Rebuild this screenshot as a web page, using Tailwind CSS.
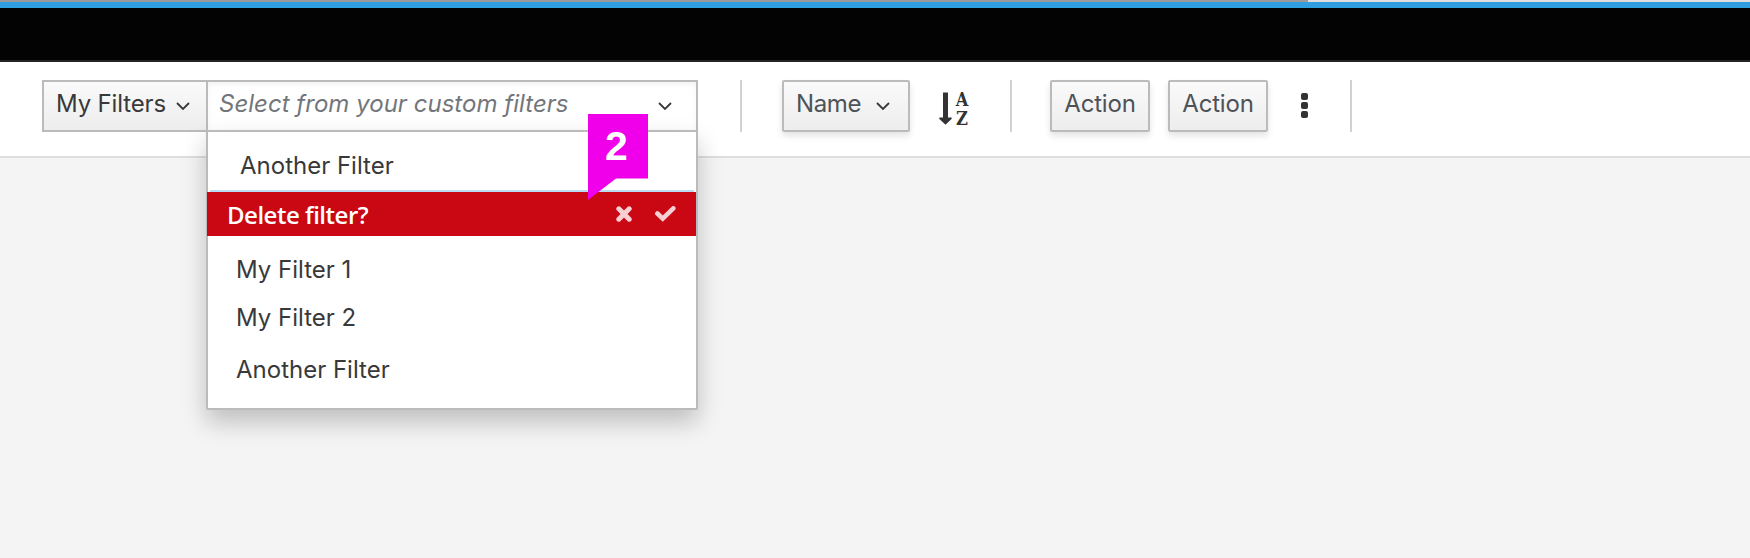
<!DOCTYPE html>
<html lang="en">
<head>
<meta charset="utf-8">
<title>Filters</title>
<script src="https://cdn.jsdelivr.net/npm/@tailwindcss/browser@4"></script>
</head>
<body class="w-[1750px] h-[558px] overflow-hidden bg-[#f4f4f4] font-['Inter',sans-serif] text-[24px] leading-[28px] text-[#393939]">
  <div class="flex h-[2px] bg-[#dfdfe0]"><div class="w-[1308px] bg-[#9b9b9b]"></div></div>
  <header class="h-[60px] border-t-[6px] border-t-[#2f9fe0] border-b-2 border-b-[#252525] bg-[#030303]"></header>
  <main class="flex h-[96px] items-start border-b-2 border-[#dedede] bg-white pl-[42px] pt-[18px] whitespace-nowrap">
    <button class="flex h-[52px] w-[164px] border-2 border-r-0 border-[#bbbbbb] bg-linear-to-b from-[#fafafa] to-[#ededed] pl-[12px] pt-[8px]">
      <span class="w-[120px] text-left tracking-[-0.15px]">My Filters</span>
      <svg class="mt-[11px] h-[10px] w-[14px]" viewBox="0 0 14 10" fill="none" stroke="#393939" stroke-width="1.8"><path d="M1 2 7 8 13 2"/></svg>
    </button>
    <div class="relative w-[492px]">
      <div class="flex h-[52px] border-2 border-[#bbbbbb] bg-white pl-[11px] pt-[8px] shadow-[inset_0_3px_5px_#0000000d]">
        <span class="w-[439px] italic tracking-[0.02px] text-[#72767b]">Select from your custom filters</span>
        <svg class="mt-[11px] h-[10px] w-[14px]" viewBox="0 0 14 10" fill="none" stroke="#393939" stroke-width="1.8"><path d="M1 2 7 8 13 2"/></svg>
      </div>
      <div class="absolute left-0 top-[50px] h-[280px] w-[492px] rounded-b-[2px] border-2 border-[#bbbbbb] bg-white shadow-[0_12px_24px_#00000038]">
        <div class="mx-[2px] h-[60px] border-b-2 border-[#b9dcf2] pl-[30px] pt-[20px]">Another Filter</div>
        <div class="-ml-px flex h-[44px] items-center bg-[#c90813] pl-[20px]">
          <span class="w-[389px] pt-px font-['Open_Sans',sans-serif] text-[24px] font-semibold tracking-[-0.5px] text-white">Delete filter?</span>
          <svg class="h-[16px] w-[16px]" viewBox="0 0 16 16" stroke="#f8d0d4" stroke-width="5" stroke-linecap="round"><path d="M2.800 2.800 13.200 13.200M13.200 2.800 2.800 13.200"/></svg>
          <svg class="ml-[23px] h-[16px] w-[21px]" viewBox="0 0 21 16" fill="none" stroke="#f8d0d4" stroke-width="4.6" stroke-linecap="round"><path d="M2.400 7.500 7.800 12.600 18.300 2.400"/></svg>
        </div>
        <div class="mt-[20px] h-[48px] pl-[28px]">My Filter 1</div>
        <div class="h-[52px] pl-[28px]">My Filter 2</div>
        <div class="pl-[28px]">Another Filter</div>
      </div>
      <div class="absolute left-[382px] top-[34px] h-[86px] w-[60px]">
        <svg class="absolute inset-0" width="60" height="86" viewBox="0 0 60 86"><path fill="#f000ea" d="M0 0H60V64.500H28L0 86Z"/></svg>
        <div class="relative pt-[12px] pr-[3px] text-center font-['Liberation_Sans',sans-serif] text-[41px] leading-[40px] font-bold text-white">2</div>
      </div>
    </div>
    <div class="ml-[42px] h-[52px] w-[2px] bg-[#d1d1d1]"></div>
    <button class="ml-[40px] flex h-[52px] w-[128px] rounded-[2px] border-2 border-[#bbbbbb] bg-linear-to-b from-[#fafafa] to-[#ededed] pl-[12px] pt-[8px] text-[#4d5258] shadow-[0_4px_6px_#0000001c]">
      <span class="w-[80px] text-left tracking-[-0.4px]">Name</span>
      <svg class="mt-[11px] h-[10px] w-[14px]" viewBox="0 0 14 10" fill="none" stroke="#393939" stroke-width="1.8"><path d="M1 2 7 8 13 2"/></svg>
    </button>
    <div class="ml-[29px] mt-[11px] flex text-[#333]">
      <svg class="mt-px h-[33px] w-[13px]" viewBox="0 0 13 33" fill="#333"><path d="M4 .5H9V25.500H12Q13.300 26 12.500 27L7 32.300Q6.500 32.800 6 32.300L.4 27Q-.3 26 .9 25.500H4Z"/></svg>
      <div class="ml-[2px] w-[16px] scale-x-88 text-center font-['DejaVu_Serif',serif] text-[18.500px] leading-[18.500px] font-bold"><div class="-mx-2">A</div><div class="-mx-2">Z</div></div>
    </div>
    <div class="ml-[40px] h-[52px] w-[2px] bg-[#d1d1d1]"></div>
    <button class="ml-[38px] h-[52px] w-[100px] rounded-[2px] border-2 border-[#bbbbbb] bg-linear-to-b from-[#fafafa] to-[#ededed] pb-[4px] tracking-[-0.2px] text-[#4d5258] shadow-[0_4px_6px_#0000001c]">Action</button>
    <button class="ml-[18px] h-[52px] w-[100px] rounded-[2px] border-2 border-[#bbbbbb] bg-linear-to-b from-[#fafafa] to-[#ededed] pb-[4px] tracking-[-0.2px] text-[#4d5258] shadow-[0_4px_6px_#0000001c]">Action</button>
    <div class="ml-[33px] mt-[13px] flex w-[7px] flex-col gap-[2px]">
      <i class="h-[7px] rounded-[2px] bg-[#333]"></i><i class="h-[7px] rounded-[2px] bg-[#333]"></i><i class="h-[7px] rounded-[2px] bg-[#333]"></i>
    </div>
    <div class="ml-[42px] h-[52px] w-[2px] bg-[#d1d1d1]"></div>
  </main>
</body>
</html>
